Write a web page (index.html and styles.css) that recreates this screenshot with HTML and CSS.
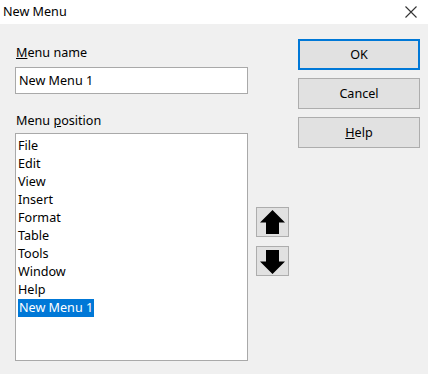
FILE: index.html
```html
<!DOCTYPE html>
<html>
<head>
<meta charset="utf-8">
<title>New Menu</title>
<link rel="stylesheet" href="styles.css">
</head>
<body>
<div class="dlg">
  <div class="titlebar">
    <span class="title">New Menu</span>
    <svg class="close" width="12" height="12" viewBox="0 0 12 12"><path d="M0.5 0.5 L11.5 11.5 M11.5 0.5 L0.5 11.5" stroke="#333" stroke-width="1.1" fill="none"/></svg>
  </div>
  <div class="body">
    <div class="leftcol">
      <div class="lbl"><u>M</u>enu name</div>
      <div class="field">New Menu 1</div>
      <div class="lbl lbl2">Menu <u>p</u>osition</div>
      <div class="list">
        <div class="item">File</div>
        <div class="item">Edit</div>
        <div class="item">View</div>
        <div class="item">Insert</div>
        <div class="item">Format</div>
        <div class="item">Table</div>
        <div class="item">Tools</div>
        <div class="item">Window</div>
        <div class="item">Help</div>
        <div class="item"><span class="sel">New Menu 1</span></div>
      </div>
    </div>
    <div class="midcol">
      <div class="arrbtn">
        <svg width="27" height="25" viewBox="0 0 27 25"><path d="M13.5 0 L26 12.5 L20 12.5 L20 24 L7 24 L7 12.5 L1 12.5 Z" fill="#000"/></svg>
      </div>
      <div class="arrbtn">
        <svg width="27" height="25" viewBox="0 0 27 25"><path d="M13.5 25 L26 12.5 L20 12.5 L20 1 L7 1 L7 12.5 L1 12.5 Z" fill="#000"/></svg>
      </div>
    </div>
    <div class="rightcol">
      <div class="btn btn-def">OK</div>
      <div class="btn">Cancel</div>
      <div class="btn"><u>H</u>elp</div>
    </div>
  </div>
</div>
</body>
</html>
```
FILE: styles.css
```css
*{ margin:0; padding:0; box-sizing:border-box;}
body{ width:428px; height:374px; background:#f0f0f0; font-family:"Noto Sans","Open Sans",sans-serif; font-size:12.6px; color:#000; overflow:hidden;}
.dlg{ width:428px; height:374px; display:flex; flex-direction:column;}
.titlebar{ height:24px; background:#fff; display:flex; align-items:center; justify-content:space-between; padding:0 11px 0 3px;}
.title{ font-size:12.6px; line-height:24px; color:#000;}
.close{ display:block;}
.body{ flex:1; display:flex; padding:14px 0 0 15px;}
.leftcol{ width:233px; display:flex; flex-direction:column;}
.lbl{ height:20px; line-height:18px; padding-left:1px; margin-top:6px;}
.lbl2{ margin-top:18px;}
.field{ margin-top:3px; height:27px; background:#fff; border:1px solid #a9a9a9; line-height:25px; padding-left:3px;}
.list{ margin-top:1px; height:228px; background:#fff; border:1px solid #a9a9a9; padding:3px 0 0 2px;}
.item{ height:18px; line-height:18px;}
.sel{ display:inline-block; background:#0078d7; color:#fff; padding:0 1px; height:18px;}
.midcol{ width:50px; display:flex; flex-direction:column; align-items:flex-start; padding:169px 0 0 8px; gap:9px;}
.arrbtn{ width:33px; height:30px; background:#e1e1e1; border:1px solid #adadad; display:flex; align-items:center; justify-content:center;}
.rightcol{ width:122px; display:flex; flex-direction:column; gap:8px; padding-top:1px;}
.btn{ height:31px; background:#e1e1e1; border:1px solid #adadad; text-align:center; line-height:29px;}
.btn-def{ border:2px solid #0078d7; line-height:27px;}
```
